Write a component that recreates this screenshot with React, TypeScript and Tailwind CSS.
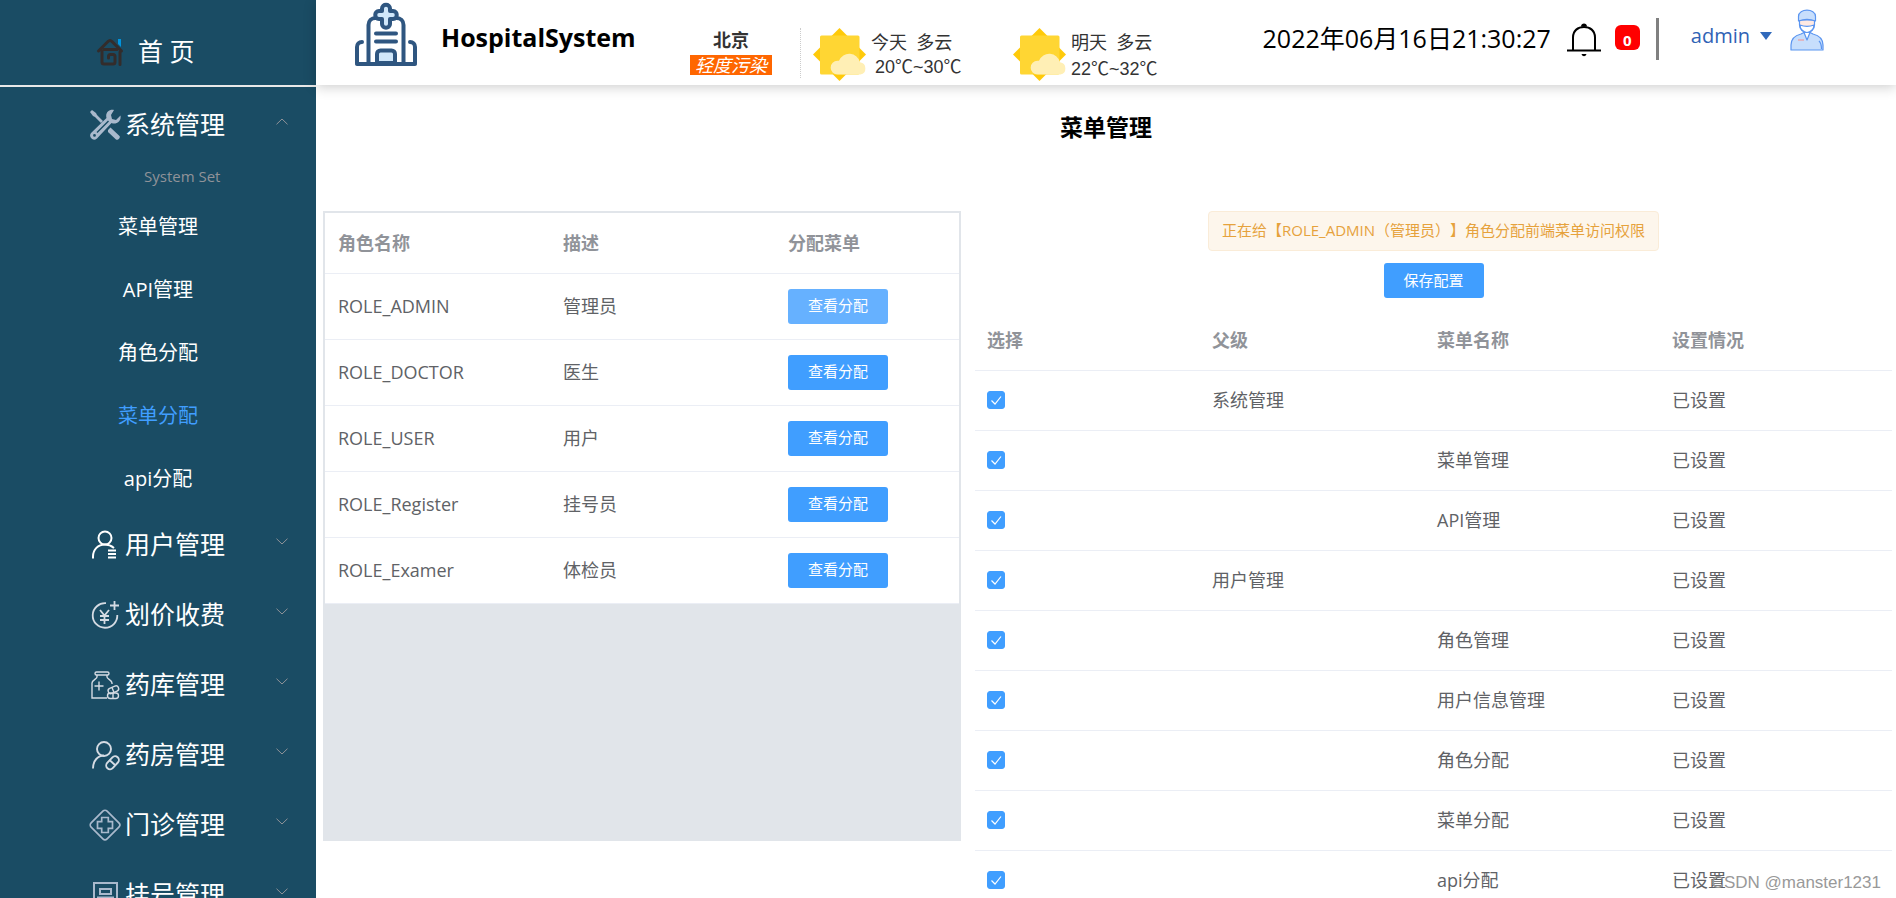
import { useState } from "react";
import type { ReactNode } from "react";

const line = "fill-none stroke-[#d5dbe3]";

function ToolsIcon() {
  return (
    <svg viewBox="0 0 32 32" className="size-8 shrink-0" fill="#a9b9cc" aria-hidden="true">
      <path d="M1 3 3 1l4 3 1 2 6 6-2 2-6-6-2-1z" />
      <path d="M19 21l2.500-2.500 9 8.500c1.500 1.500-2 5-3.500 3.500l-8-7.500z" />
      <path
        fillRule="evenodd"
        d="M25 1c-5-1-9 3-7.500 8L2 24c-3 4 2 9 6 5.500L22.500 14c5 2 10-2 9-7.500L27 11l-4-1-1-4zM5.500 25a1.400 1.400 0 1 0 0 2.800 1.400 1.400 0 0 0 0-2.800zM7.500 23 19 11.500l1 1L8.500 24z"
      />
    </svg>
  );
}

function UserListIcon() {
  return (
    <svg viewBox="0 0 32 32" className="size-8 shrink-0 fill-none stroke-white" strokeWidth="2" aria-hidden="true">
      <circle cx="16" cy="9" r="6.500" />
      <path d="M4 29.500v-2c0-7 5-12 12-12 4 0 6 1 9 3.500M19 21.500h8M19 25h8M19 28.500h8" />
    </svg>
  );
}

function FeeIcon() {
  return (
    <svg viewBox="0 0 32 32" className={`size-8 shrink-0 ${line}`} strokeWidth="1.800" aria-hidden="true">
      <path d="M17 4.200A12.300 12.300 0 1 0 28.300 16M25.500 2v9M21 6.500h9M11 11l4.500 5.500L20 11M15.500 16.500V25M11 17h9M11 21h9" />
    </svg>
  );
}

function StoreIcon() {
  return (
    <svg viewBox="0 0 32 32" className={`size-8 shrink-0 ${line}`} strokeWidth="1.400" aria-hidden="true">
      <rect x="6" y="3" width="14" height="3" rx="1.500" />
      <path d="M8 6v2c0 2-5 3-5 6v15h15M18 6v2c0 2 5 3 5 6v1M10 12.500v9M5.500 17h9" />
      <rect x="19" y="18" width="11" height="5.500" rx="2.700" transform="rotate(-25 24.500 21)" />
      <rect x="18.500" y="24" width="11" height="5.500" rx="2.700" />
      <path d="M23 18.500l2 5M24 24v5.500" />
    </svg>
  );
}

function PharmacyIcon() {
  return (
    <svg viewBox="0 0 32 32" className={`size-8 shrink-0 ${line}`} strokeWidth="1.900" aria-hidden="true">
      <circle cx="15" cy="10" r="7" />
      <path d="M4 29.500c0-8 5-13 11-13" />
      <rect x="16" y="20" width="15" height="7.500" rx="3.700" transform="rotate(-47 23.500 23.700)" />
      <path d="M20.500 21l5.500 5" />
    </svg>
  );
}

function ClinicIcon() {
  return (
    <svg viewBox="0 0 32 32" className="size-8 shrink-0 fill-none stroke-[#a9b9cc]" strokeWidth="1.700" aria-hidden="true">
      <rect x="4.700" y="4.700" width="22.600" height="22.600" rx="3" transform="rotate(45 16 16)" />
      <path d="M12.700 8.500h6.600v4.200h4.200v6.600h-4.200v4.200h-6.600v-4.200H8.500v-6.600h4.200z" />
    </svg>
  );
}

function RegisterIcon() {
  return (
    <svg viewBox="0 0 32 32" className="size-8 shrink-0 fill-none stroke-[#a9b9cc]" strokeWidth="2" aria-hidden="true">
      <path d="M5 4h23v25H5zM11 10h11v5H11zM8 18.500h17M12 19v4h10v4" />
    </svg>
  );
}

function HomeIcon() {
  return (
    <svg viewBox="0 0 28 28" className="size-7 shrink-0 fill-none stroke-[#332c2b]" strokeWidth="3" strokeLinecap="round" strokeLinejoin="round" aria-hidden="true">
      <path d="M22 1h3v8l-3-3z" fill="#0094de" stroke="none" />
      <path d="M2.500 13 12 3.500c1.500-1.500 2.500-1.500 4 0l9.500 9.500M24 14v12.500M8 11.500h13M6 13v11c0 1.500.5 2 2 2h9c1.500 0 2-.5 2-2v-5.500c0-1.500-.5-2-2-2h-2.500c-1.500 0-2 .5-2 2V20" />
    </svg>
  );
}

function HospitalLogo() {
  return (
    <svg viewBox="0 0 62 64" className="h-16 w-[62px] shrink-0 fill-none stroke-[#2f5680]" strokeWidth="4" strokeLinecap="round" strokeLinejoin="round" aria-hidden="true">
      <path d="M13.500 61V23c0-4 3-7 7-7h21c4 0 7 3 7 7v38" fill="#fff" />
      <path d="M2 61V45c0-3 2-5 5-5M60 61V45c0-3-2-5-5-5" />
      <path d="M27 9V6.500c0-5 8-5 8 0V9h3c5 0 5 8 0 8h-3v5c0 5-8 5-8 0v-5h-3c-5 0-5-8 0-8z" fill="#d0e7fa" />
      <path d="M22 61V52c0-2 1.500-3.500 3.500-3.500h11c2 0 3.500 1.500 3.500 3.500v9z" fill="#d0e7fa" />
      <path d="M21 31.500h20M21 39.500h20M2 62h58" />
    </svg>
  );
}

function SunCloud() {
  return (
    <svg viewBox="0 0 54 54" className="size-[54px] shrink-0" aria-hidden="true">
      <path d="M26.500 0 53 26.500 26.500 53 0 26.500z" fill="#ffca0a" />
      <rect x="7" y="7.500" width="39.500" height="39" rx="1.500" fill="#ffd633" />
      <path d="M24.500 46.500a6.800 6.800 0 0 1 0-13.700h1.500a11 11 0 0 1 21 1.500 6.200 6.200 0 0 1 .5 12.200z" fill="#ffefb5" />
    </svg>
  );
}

function BellIcon() {
  return (
    <svg viewBox="0 0 34 34" className="size-[34px]" aria-hidden="true">
      <path d="M0 27.500h34M6 27V14.500c0-7 5-10.500 11-10.500s11 3.500 11 10.500V27" fill="none" stroke="#000" strokeWidth="2" />
      <path d="M14 3.500c0-4 6-4 6 0zM14.500 31h5c-1 3-4 3-5 0z" />
    </svg>
  );
}

function DoctorIcon() {
  return (
    <svg viewBox="0 0 34 42" className="h-[42px] w-[34px] shrink-0" stroke="#5b95f0" strokeWidth="1.200" strokeLinejoin="round" aria-hidden="true">
      <path d="M1 41v-5c0-6 4-9.500 10-11l3-1.500h6l3 1.500c6 1.500 10 5 10 11v5z" fill="#c7defc" />
      <path d="M14 23.500h6L17 31z" fill="#fff" />
      <path d="M29 32c2 2 2.500 5 2.500 8" fill="none" />
      <path d="M9.500 11h15v5c0 5-4 7.500-7.500 7.500S9.500 21 9.500 16z" fill="#ffe9e2" />
      <path d="M10 16c4 1.500 10 1.500 14 0 0 4-3.500 7.500-7 7.500S10 20 10 16z" fill="#fff" />
      <path d="M8.500 12V7.500C8.500-1 25.500-1 25.500 7.500V12c-5-2-12-2-17 0z" fill="#c7defc" />
      <path d="M8 31h6" stroke="#f19a9a" />
    </svg>
  );
}

function Chevron({ up = false }: { up?: boolean }) {
  return (
    <svg viewBox="0 0 12 7" className="mb-2 h-[7px] w-3 fill-none stroke-[#909399]" aria-hidden="true">
      <path d={up ? "M.5 6.300 6 1l5.500 5.300" : "M.5.700 6 6 11.500.700"} />
    </svg>
  );
}

const submenu = ["菜单管理", "API管理", "角色分配", "菜单分配", "api分配"];

const groups: { label: string; icon: ReactNode }[] = [
  { label: "用户管理", icon: <UserListIcon /> },
  { label: "划价收费", icon: <FeeIcon /> },
  { label: "药库管理", icon: <StoreIcon /> },
  { label: "药房管理", icon: <PharmacyIcon /> },
  { label: "门诊管理", icon: <ClinicIcon /> },
  { label: "挂号管理", icon: <RegisterIcon /> },
];

const roles = [
  ["ROLE_ADMIN", "管理员"],
  ["ROLE_DOCTOR", "医生"],
  ["ROLE_USER", "用户"],
  ["ROLE_Register", "挂号员"],
  ["ROLE_Examer", "体检员"],
];

const menus = [
  ["系统管理", ""],
  ["", "菜单管理"],
  ["", "API管理"],
  ["用户管理", ""],
  ["", "角色管理"],
  ["", "用户信息管理"],
  ["", "角色分配"],
  ["", "菜单分配"],
  ["", "api分配"],
];

function GroupButton({ label, icon, open = false }: { label: string; icon: ReactNode; open?: boolean }) {
  return (
    <button type="button" aria-expanded={open} className="flex h-[70px] w-full shrink-0 items-center pr-7 pl-[89px] text-[25px] text-white">
      {icon}
      <span className="ml-1 flex-1 text-left">{label}</span>
      <Chevron up={open} />
    </button>
  );
}

function Sidebar() {
  return (
    <nav className="flex w-[316px] shrink-0 flex-col overflow-hidden bg-[#1a4c64]">
      <a href="#home" className="mb-[3px] flex h-[87px] shrink-0 items-center gap-[14px] border-b-2 border-[#e8e8e8] pt-[18px] pl-24 text-[25px] text-white">
        <HomeIcon />
        <span>首 页</span>
      </a>
      <GroupButton label="系统管理" icon={<ToolsIcon />} open />
      <div className="h-[35px] shrink-0 pt-1 pl-36 text-[15px] leading-6 text-[#909399]">System Set</div>
      {submenu.map((item) => (
        <a
          key={item}
          href={`#${item}`}
          className={`flex h-[63px] shrink-0 items-center justify-center text-xl hover:text-[#409eff] ${item === "菜单分配" ? "text-[#409eff]" : "text-white"}`}
        >
          {item}
        </a>
      ))}
      {groups.map((g) => (
        <GroupButton key={g.label} label={g.label} icon={g.icon} />
      ))}
    </nav>
  );
}

function Header() {
  return (
    <header className="flex h-[85px] shrink-0 items-start bg-white pr-[72px] pl-[39px] shadow-[0_2px_12px_rgba(0,0,0,0.2)]">
      <div className="flex items-center pt-0.5">
        <HospitalLogo />
        <h1 className="ml-6 w-[249px] pt-2 text-[25px] font-bold text-black">HospitalSystem</h1>
      </div>
      <div className="flex items-start text-lg leading-6 text-[#333]">
        <div className="mt-7 flex h-[50px] w-[111px] flex-col items-start border-r border-dotted border-[#ccc]">
          <strong className="w-[82px] text-center">北京</strong>
          <em className="mt-[3px] h-5 w-[82px] bg-[#ff6600] text-center leading-5 text-white">轻度污染</em>
        </div>
        <div className="mt-7 ml-3 flex w-50 gap-1">
          <SunCloud />
          <div className="pt-0.5 whitespace-nowrap">
            <div>今天&nbsp; 多云</div>
            <div className="mt-px pl-1 font-[Liberation_Sans,Noto_Sans_CJK_SC,sans-serif]">20℃~30℃</div>
          </div>
        </div>
        <div className="mt-7 flex gap-1">
          <SunCloud />
          <div className="pt-0.5 whitespace-nowrap">
            <div>明天&nbsp; 多云</div>
            <div className="mt-[3px] font-[Liberation_Sans,Noto_Sans_CJK_SC,sans-serif]">22℃~32℃</div>
          </div>
        </div>
      </div>
      <div className="ml-auto flex items-start whitespace-nowrap">
        <time className="pt-5 text-[25px] leading-9 text-black">2022年06月16日21:30:27</time>
        <button type="button" aria-label="通知" className="mt-[23px] ml-4">
          <BellIcon />
        </button>
        <span className="mt-[25px] ml-[14px] h-[25px] w-[25px] rounded-md bg-[#ff0000] text-center text-[15px] leading-[30px] font-bold text-white">0</span>
        <span className="mt-[18px] ml-4 h-[42px] w-[3px] bg-[#808080]" />
        <button type="button" className="mt-5 ml-8 flex items-center gap-[10px] text-xl leading-8 text-[#2f62b5]">
          admin
          <svg viewBox="0 0 12 8" className="h-2 w-3 fill-[#3069bb]" aria-hidden="true">
            <path d="M0 0h12L6 8z" />
          </svg>
        </button>
        <div className="mt-[9px] ml-[18px]">
          <DoctorIcon />
        </div>
      </div>
    </header>
  );
}

function RoleTable() {
  return (
    <section className="h-[630px] border-2 border-[#e1e5ea] bg-[#e1e5ea]">
      <table className="w-full table-fixed bg-white text-left text-lg text-[#606266]">
        <thead>
          <tr className="h-15 border-b border-[#ebeef5] text-[#909399]">
            <th className="w-[225px] pl-[13px] font-bold">角色名称</th>
            <th className="w-[225px] pl-[13px] font-bold">描述</th>
            <th className="pl-[13px] font-bold">分配菜单</th>
          </tr>
        </thead>
        <tbody>
          {roles.map(([role, desc], i) => (
            <tr key={role} className="h-[66px] border-b border-[#ebeef5]">
              <td className="pl-[13px]">{role}</td>
              <td className="pl-[13px]">{desc}</td>
              <td className="pl-[13px]">
                <button
                  type="button"
                  className={`block h-[35px] w-[100px] rounded-[3px] text-[15px] text-white ${i === 0 ? "bg-[#66b1ff]" : "bg-[#409eff]"}`}
                >
                  查看分配
                </button>
              </td>
            </tr>
          ))}
        </tbody>
      </table>
    </section>
  );
}

function MenuTable() {
  const [checked, setChecked] = useState(menus.map(() => true));
  return (
    <section className="flex min-w-0 flex-col items-center">
      <p className="h-10 rounded border border-[#faecd8] bg-[#fdf6ec] px-[13px] text-[15px] leading-[37px] whitespace-nowrap text-[#e6a23c] [text-spacing-trim:space-all]">
        正在给【ROLE_ADMIN（管理员）】角色分配前端菜单访问权限
      </p>
      <button type="button" className="mt-3 h-[35px] w-[100px] rounded-[3px] bg-[#409eff] text-[15px] text-white">
        保存配置
      </button>
      <table className="mt-3 w-full table-fixed text-left text-lg text-[#606266]">
        <thead>
          <tr className="h-15 border-b border-[#ebeef5] text-[#909399]">
            <th className="w-[225px] pl-3 font-bold">选择</th>
            <th className="w-[225px] pl-3 font-bold">父级</th>
            <th className="w-[235px] pl-3 font-bold">菜单名称</th>
            <th className="pl-3 font-bold">设置情况</th>
          </tr>
        </thead>
        <tbody>
          {menus.map(([parent, name], i) => (
            <tr key={parent + name} className="h-15 border-b border-[#ebeef5]">
              <td className="pl-3">
                <label className="relative block size-[18px]">
                  <input
                    type="checkbox"
                    aria-label={parent || name}
                    checked={checked[i]}
                    onChange={() => setChecked(checked.map((c, j) => (j === i ? !c : c)))}
                    className="peer block size-[18px] appearance-none rounded-[3px] border border-[#dcdfe6] bg-white checked:border-[#409eff] checked:bg-[#409eff]"
                  />
                  <svg viewBox="0 0 18 18" className="pointer-events-none absolute inset-0 hidden size-[18px] fill-none stroke-white peer-checked:block" strokeWidth="1.200" aria-hidden="true">
                    <path d="M4.500 9.500 8 13l6-7.500" />
                  </svg>
                </label>
              </td>
              <td className="pl-3">{parent}</td>
              <td className="pl-3">{name}</td>
              <td className="pl-3">已设置</td>
            </tr>
          ))}
        </tbody>
      </table>
    </section>
  );
}

export default function App() {
  return (
    <div className="relative flex h-screen overflow-hidden bg-white font-[Open_Sans,Noto_Sans_CJK_SC,sans-serif]">
      <Sidebar />
      <div className="flex min-w-0 flex-1 flex-col">
        <Header />
        <main className="flex flex-1 flex-col overflow-hidden pt-6">
          <h2 className="text-center text-[23px] leading-9 font-bold text-black">菜单管理</h2>
          <div className="mt-[66px] grid grid-cols-[638fr_917fr] gap-[14px] pr-1 pl-[7px]">
            <RoleTable />
            <MenuTable />
          </div>
        </main>
      </div>
      <div className="absolute right-[15px] bottom-[3px] font-[Liberation_Sans,sans-serif] text-[17px] leading-6 text-[#999]">CSDN @manster1231</div>
    </div>
  );
}
